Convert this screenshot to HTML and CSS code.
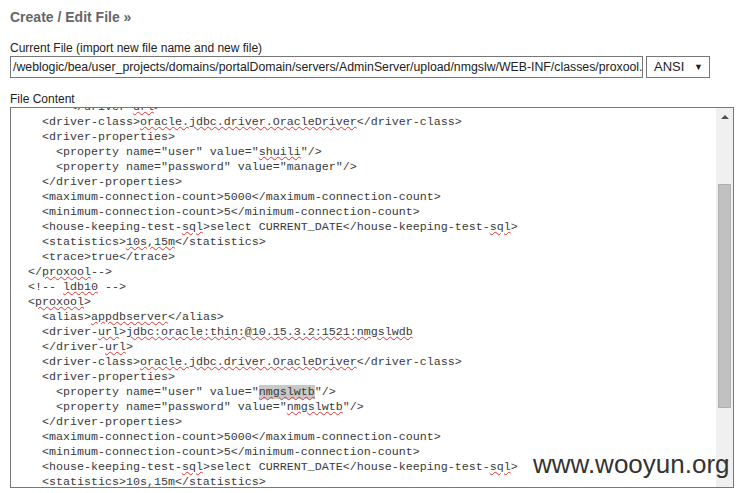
FILE: index.html
```html
<!DOCTYPE html>
<html lang="en">
<head>
  <meta charset="UTF-8">
  <title>Create / Edit File</title>
  <link rel="stylesheet" href="styles.css">
</head>
<body>
<div class="page">
  <h2 class="title">Create / Edit File &raquo;</h2>

  <label class="field-label">Current File (import new file name and new file)</label>
  <div class="file-row">
    <div class="file-input">/weblogic/bea/user_projects/domains/portalDomain/servers/AdminServer/upload/nmgslw/WEB-INF/classes/proxool.xml</div>
    <div class="encoding">ANSI <span class="caret">&#9660;</span></div>
  </div>

  <label class="field-label content-label">File Content</label>
  <div class="editor">
    <pre class="code">        &lt;/driver-<span class="sp">url</span>&gt;
    &lt;driver-class&gt;<span class="sp">oracle.jdbc.driver.OracleDriver</span>&lt;/driver-class&gt;
    &lt;driver-properties&gt;
      &lt;property name="user" value="<span class="sp">shuili</span>"/&gt;
      &lt;property name="password" value="manager"/&gt;
    &lt;/driver-properties&gt;
    &lt;maximum-connection-count&gt;5000&lt;/maximum-connection-count&gt;
    &lt;minimum-connection-count&gt;5&lt;/minimum-connection-count&gt;
    &lt;house-keeping-test-<span class="sp">sql</span>&gt;select CURRENT_DATE&lt;/house-keeping-test-<span class="sp">sql</span>&gt;
    &lt;statistics&gt;<span class="sp">10s,15m</span>&lt;/statistics&gt;
    &lt;trace&gt;true&lt;/trace&gt;
  &lt;/<span class="sp">proxool</span>--&gt;
  &lt;!-- <span class="sp">ldb10</span> --&gt;
  &lt;<span class="sp">proxool</span>&gt;
    &lt;alias&gt;<span class="sp">appdbserver</span>&lt;/alias&gt;
    &lt;driver-<span class="sp">url</span>&gt;<span class="sp">jdbc:oracle:thin:@10.15.3.2:1521:nmgslwdb</span>
    &lt;/driver-<span class="sp">url</span>&gt;
    &lt;driver-class&gt;<span class="sp">oracle.jdbc.driver.OracleDriver</span>&lt;/driver-class&gt;
    &lt;driver-properties&gt;
      &lt;property name="user" value="<span class="sp sel">nmgslwtb</span>"/&gt;
      &lt;property name="password" value="<span class="sp">nmgslwtb</span>"/&gt;
    &lt;/driver-properties&gt;
    &lt;maximum-connection-count&gt;5000&lt;/maximum-connection-count&gt;
    &lt;minimum-connection-count&gt;5&lt;/minimum-connection-count&gt;
    &lt;house-keeping-test-<span class="sp">sql</span>&gt;select CURRENT_DATE&lt;/house-keeping-test-<span class="sp">sql</span>&gt;
    &lt;statistics&gt;<span class="sp">10s,15m</span>&lt;/statistics&gt;
    &lt;trace&gt;true&lt;/trace&gt;</pre>
    <div class="scrollbar">
      <div class="arrow up"></div>
      <div class="track">
        <div class="thumb"></div>
      </div>
      <div class="arrow down"></div>
      <div class="grip"></div>
    </div>
  </div>

  <div class="watermark">www.wooyun.org</div>
</div>
</body>
</html>
```

FILE: styles.css
```css
body {
  margin: 0;
  background: #ffffff;
  font-family: "Liberation Sans", Arial, sans-serif;
  color: #222;
}
.page {
  position: relative;
  padding: 9px 5px 0 10px;
  height: 484px;
  overflow: hidden;
}
.title {
  margin: 0;
  font-size: 14px;
  line-height: 16px;
  font-weight: bold;
  color: #666;
}
.field-label {
  display: block;
  font-size: 12px;
  line-height: 14px;
  margin-top: 16px;
  color: #222;
}
.content-label {
  margin-top: 14px;
}
.file-row {
  display: flex;
  gap: 3px;
  margin-top: 1px;
}
.file-input {
  width: 627px;
  height: 20px;
  border: 1px solid #777;
  padding: 0 2px;
  font-size: 12.3px;
  line-height: 20px;
  white-space: nowrap;
  overflow: hidden;
  color: #222;
}
.encoding {
  width: 55px;
  height: 20px;
  border: 1px solid #777;
  padding-left: 7px;
  font-size: 13px;
  line-height: 20px;
  position: relative;
}
.caret {
  position: absolute;
  right: 6px;
  top: 0;
  font-size: 9px;
}
.editor {
  display: flex;
  width: 722px;
  height: 379px;
  border: 1px solid #777;
  margin-top: 1px;
  overflow: hidden;
}
.code {
  flex: 1;
  margin: -8px 0 0 0;
  padding: 0 0 0 3px;
  font-family: "Liberation Mono", "Courier New", monospace;
  font-size: 11.67px;
  line-height: 15px;
  color: #3a3a3a;
  overflow: hidden;
  white-space: pre;
}
.sp {
  text-decoration: underline wavy #e03030;
  text-decoration-thickness: 1px;
  text-underline-offset: 1px;
}
.sel {
  background: #c8c8c8;
}
.scrollbar {
  width: 17px;
  background: #f0f0f0;
  display: flex;
  flex-direction: column;
  align-items: center;
}
.arrow {
  height: 17px;
  width: 17px;
  display: flex;
  align-items: center;
  justify-content: center;
}
.arrow::before {
  content: "";
  border-left: 4px solid transparent;
  border-right: 4px solid transparent;
}
.up::before {
  border-bottom: 4px solid #505050;
}
.down::before {
  border-top: 4px solid #a0a0a0;
}
.track {
  flex: 1;
  width: 100%;
  padding-top: 59px;
  padding-bottom: 45px;
  display: flex;
  justify-content: center;
}
.thumb {
  width: 13px;
  height: 100%;
  background: #c1c1c1;
  border: 1px solid #b0b0b0;
  box-sizing: border-box;
}
.grip {
  height: 17px;
}
.watermark {
  position: absolute;
  left: 533px;
  top: 449px;
  font-size: 26px;
  color: #333;
  white-space: nowrap;
}
```
